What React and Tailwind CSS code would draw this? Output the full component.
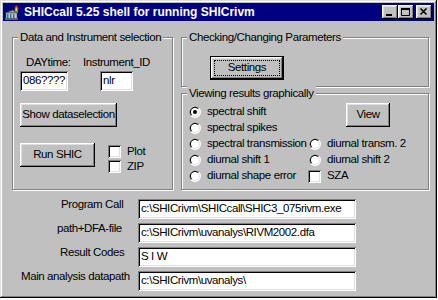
import React from 'react';

const raised =
  'bg-[#c0c0c0] shadow-[inset_-1px_-1px_#000,inset_1px_1px_#fff,inset_-2px_-2px_#808080,inset_2px_2px_#dfdfdf]';
const sunken =
  'bg-white shadow-[inset_1px_1px_#808080,inset_-1px_-1px_#fff,inset_2px_2px_#000,inset_-2px_-2px_#dfdfdf]';
const etched = 'border border-[#808080] shadow-[inset_1px_1px_0_#fff,1px_1px_0_#fff]';

const Radio = ({ checked }) => (
  <svg width="12" height="12" viewBox="0 0 12 12" className="shrink-0">
    <circle cx="6" cy="6" r="6" fill="#fff" />
    <path d="M1.76 10.24 A6 6 0 0 1 10.24 1.76 Z" fill="#808080" />
    <circle cx="6" cy="6" r="5" fill="#dfdfdf" />
    <path d="M2.46 9.54 A5 5 0 0 1 9.54 2.46 Z" fill="#000" />
    <circle cx="6" cy="6" r="4" fill="#fff" />
    {checked && <circle cx="6" cy="6" r="2" fill="#000" />}
  </svg>
);

const Check = () => <div className={`w-[13px] h-[13px] shrink-0 ${sunken}`} />;

const RadioRow = ({ label, checked }) => (
  <div className="flex items-center h-[16px] gap-[6px]">
    <Radio checked={checked} />
    <span>{label}</span>
  </div>
);

const Group = ({ label, className, children }) => (
  <div className={`${etched} ${className}`}>
    <div className="-mt-[8px] ml-[5px] px-[2px] w-fit bg-[#c0c0c0] leading-[14px]">{label}</div>
    {children}
  </div>
);

const Field = ({ label, value, pad }) => (
  <div className="flex items-start">
    <div className={`w-[135px] leading-[14px] ${pad}`}>{label}</div>
    <div className={`mt-[2px] w-[218px] h-[20px] pl-[3px] flex items-center ${sunken}`}>{value}</div>
  </div>
);

const TitleIcon = () => (
  <svg width="16" height="16" viewBox="0 0 16 16">
    <path d="M12 1 C14 3 15 4 14 7 L11 7 C10 5 11 4 12 1 Z" fill="#e8401c" />
    <path d="M12 3 C13 4.5 13.5 5 13 7 L11.5 7 C11.2 5.5 11.6 4.5 12 3 Z" fill="#ffd000" />
    <rect x="11" y="7" width="3" height="2" fill="#808080" />
    <path d="M1 9 L9 6 L13 9 Z" fill="#a0a0a0" stroke="#404040" strokeWidth="0.6" />
    <rect x="2" y="9" width="11" height="6" fill="#c8c8c8" stroke="#505050" strokeWidth="0.6" />
    <rect x="3" y="10" width="1.5" height="5" fill="#2080a0" />
    <rect x="6" y="10" width="1.5" height="5" fill="#2080a0" />
    <rect x="9" y="10" width="1.5" height="5" fill="#2080a0" />
    <rect x="1" y="14" width="13" height="2" fill="#606060" />
  </svg>
);

const CapButton = ({ children }) => (
  <div className={`w-[16px] h-[14px] ${raised} flex items-center justify-center`}>{children}</div>
);

export default function App() {
  return (
    <div className="w-[438px] h-[300px] bg-white font-['Liberation_Sans',Arial,sans-serif] text-[11.5px] tracking-[-0.4px] text-black">
      <div className="w-[437px] h-[298px] p-[3px] bg-[#c0c0c0] shadow-[inset_-1px_-1px_#000,inset_1px_1px_#dfdfdf,inset_-2px_-2px_#808080,inset_2px_2px_#fff]">
        {/* Title bar */}
        <div className="h-[18px] bg-[#000080] flex items-center pl-[1px] pr-[2px]">
          <TitleIcon />
          <span className="ml-[4px] text-white font-bold text-[12px] tracking-normal">
            SHICcall 5.25 shell for running SHICrivm
          </span>
          <div className="ml-auto flex">
            <CapButton>
              <svg width="16" height="14" viewBox="0 0 16 14">
                <rect x="4" y="9" width="6" height="2" fill="#000" />
              </svg>
            </CapButton>
            <CapButton>
              <svg width="16" height="14" viewBox="0 0 16 14">
                <path d="M3.5 3.5 H11.5 V10.5 H3.5 Z" fill="none" stroke="#000" strokeWidth="1" />
                <rect x="3" y="3" width="9" height="2" fill="#000" />
              </svg>
            </CapButton>
            <div className="ml-[2px]">
              <CapButton>
                <svg width="16" height="14" viewBox="0 0 16 14">
                  <path d="M4.5 3.5 L10.5 9.5 M10.5 3.5 L4.5 9.5" stroke="#000" strokeWidth="1.6" />
                </svg>
              </CapButton>
            </div>
          </div>
        </div>

        {/* Groups */}
        <div className="flex gap-[8px] pl-[9px] pt-[16px]">
          <Group label="Data and Instrument selection" className="w-[161px] h-[153px]">
            <div className="mt-[11px] flex leading-[14px]">
              <span className="ml-[13px] w-[57px]">DAYtime:</span>
              <span>Instrument_ID</span>
            </div>
            <div className="mt-[2px] flex">
              <div className={`ml-[7px] w-[48px] h-[20px] pl-[3px] flex items-center ${sunken}`}>086????</div>
              <div className={`ml-[32px] w-[33px] h-[20px] pl-[3px] flex items-center ${sunken}`}>nlr</div>
            </div>
            <div className={`mt-[12px] ml-[7px] w-[97px] h-[24px] flex items-center justify-center ${raised}`}>
              Show dataselection
            </div>
            <div className="mt-[16px] flex">
              <div className={`ml-[7px] w-[75px] h-[24px] flex items-center justify-center ${raised}`}>Run SHIC</div>
              <div className="ml-[13px] mt-[2px] flex flex-col gap-[2px]">
                <div className="flex items-center h-[13px] gap-[6px]">
                  <Check />
                  <span>Plot</span>
                </div>
                <div className="flex items-center h-[13px] gap-[6px]">
                  <Check />
                  <span>ZIP</span>
                </div>
              </div>
            </div>
          </Group>

          <div className="w-[248px] flex flex-col gap-[6px]">
            <Group label="Checking/Changing Parameters" className="h-[50px]">
              <div className="mt-[12px] ml-[28px] w-[74px] h-[24px] border border-black">
                <div className={`w-full h-full p-[3px] ${raised}`}>
                  <div className="w-full h-full border border-dotted border-black flex items-center justify-center">
                    Settings
                  </div>
                </div>
              </div>
            </Group>

            <Group label="Viewing results graphically" className="h-[97px]">
              <div className="pl-[7px] mt-[4px]">
                <div className="flex">
                  <div className="w-[120px]">
                    <RadioRow checked label="spectral shift" />
                    <RadioRow label="spectral spikes" />
                  </div>
                  <div className={`ml-[37px] -mt-[1px] w-[44px] h-[24px] flex items-center justify-center ${raised}`}>
                    View
                  </div>
                </div>
                <div className="grid grid-cols-[120px_auto]">
                  <RadioRow label="spectral transmission" />
                  <RadioRow label="diurnal transm. 2" />
                  <RadioRow label="diurnal shift 1" />
                  <RadioRow label="diurnal shift 2" />
                  <RadioRow label="diurnal shape error" />
                  <div className="flex items-center h-[16px] gap-[6px] -ml-[1px]">
                    <Check />
                    <span>SZA</span>
                  </div>
                </div>
              </div>
            </Group>
          </div>
        </div>

        {/* Paths */}
        <div className="mt-[7px] flex flex-col gap-[2px]">
          <Field label="Program Call" value="c:\SHICrivm\SHICcall\SHIC3_075rivm.exe" pad="pl-[58px]" />
          <Field label="path+DFA-file" value="c:\SHICrivm\uvanalys\RIVM2002.dfa" pad="pl-[54px]" />
          <Field label="Result Codes" value="S I W" pad="pl-[57px]" />
          <Field label="Main analysis datapath" value="c:\SHICrivm\uvanalys\" pad="pl-[18px]" />
        </div>
      </div>
    </div>
  );
}
